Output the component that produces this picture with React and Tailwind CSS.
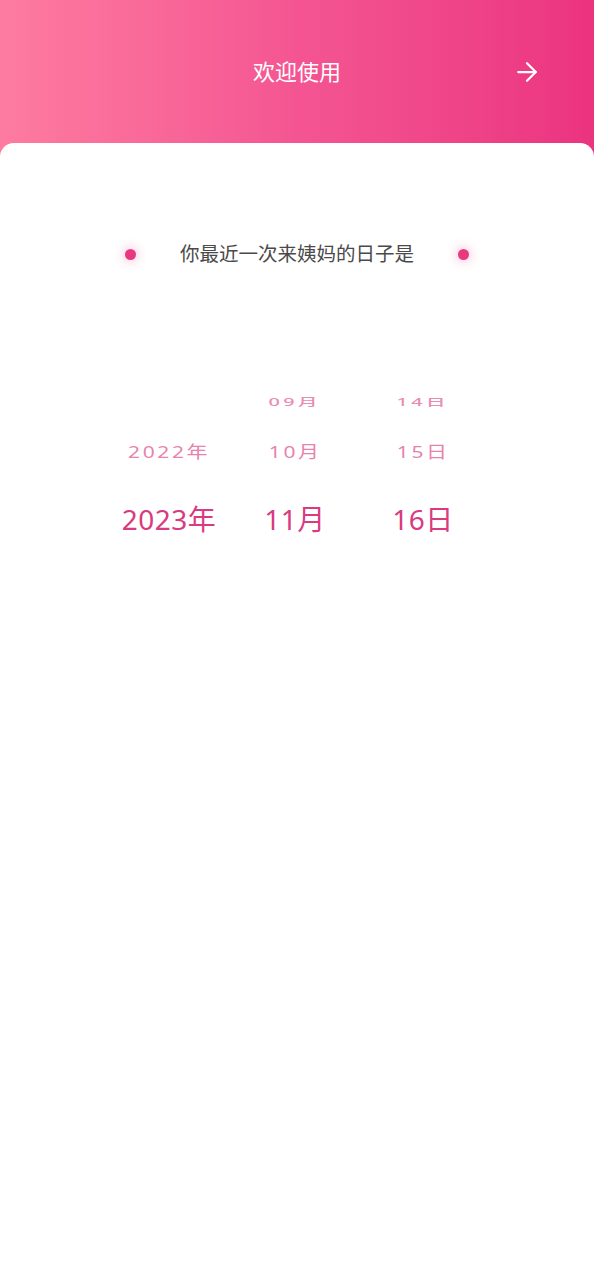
import { ArrowRight } from "lucide-react"

const font = { fontFamily: '"Noto Sans", "Noto Sans CJK SC", sans-serif' }

const columns = [
  { key: "year", width: "w-[126px]", items: ["", "2022年", "2023年"] },
  { key: "month", width: "w-[126px]", items: ["09月", "10月", "11月"] },
  { key: "day", width: "w-[130px]", items: ["14日", "15日", "16日"] },
]

function WheelColumn({ col }) {
  const [far, near, current] = col.items
  return (
    <div className={`${col.width} flex flex-col items-center`}>
      <div className="h-[34px] flex items-center justify-center">
        <span className="text-[18px] font-medium tracking-[3px] text-[#e98bb3] scale-x-[1.1] scale-y-[0.55] leading-none">{far}</span>
      </div>
      <div className="h-[66px] flex items-center justify-center">
        <span className="text-[20px] tracking-[2.5px] text-[#e783ad] scale-x-[1.05] scale-y-[0.85] leading-none">{near}</span>
      </div>
      <div className="h-[68px] flex items-center justify-center">
        <span className="text-[28px] tracking-[0.5px] text-[#d93a80] leading-none">{current}</span>
      </div>
    </div>
  )
}

export default function App() {
  return (
    <div className="min-h-[1280px] flex flex-col bg-linear-to-r from-[#fd7ba0] via-[#f45592] to-[#eb3380]" style={font}>
      <div className="h-[143px] grid grid-cols-[1fr_auto_1fr] items-center">
        <div />
        <h1 className="text-[22px] text-white font-normal">欢迎使用</h1>
        <div className="flex justify-end pr-[52px]">
          <ArrowRight size={30} strokeWidth={1.8} className="text-white" />
        </div>
      </div>

      <div className="flex-1 bg-white rounded-t-[14px] pt-[91px]">
        <div className="h-[40px] flex items-center justify-center gap-[44px]">
          <span className="w-[11px] h-[11px] rounded-full bg-[#e8387f] shadow-[0_0_10px_3px_rgba(232,56,127,0.2)]" />
          <p className="text-[19.5px] text-[#4a4a4a]">你最近一次来姨妈的日子是</p>
          <span className="w-[11px] h-[11px] rounded-full bg-[#e8387f] shadow-[0_0_10px_3px_rgba(232,56,127,0.2)]" />
        </div>

        <div className="mt-[111px] flex pl-[106px]">
          {columns.map((col) => (
            <WheelColumn key={col.key} col={col} />
          ))}
        </div>
      </div>
    </div>
  )
}
